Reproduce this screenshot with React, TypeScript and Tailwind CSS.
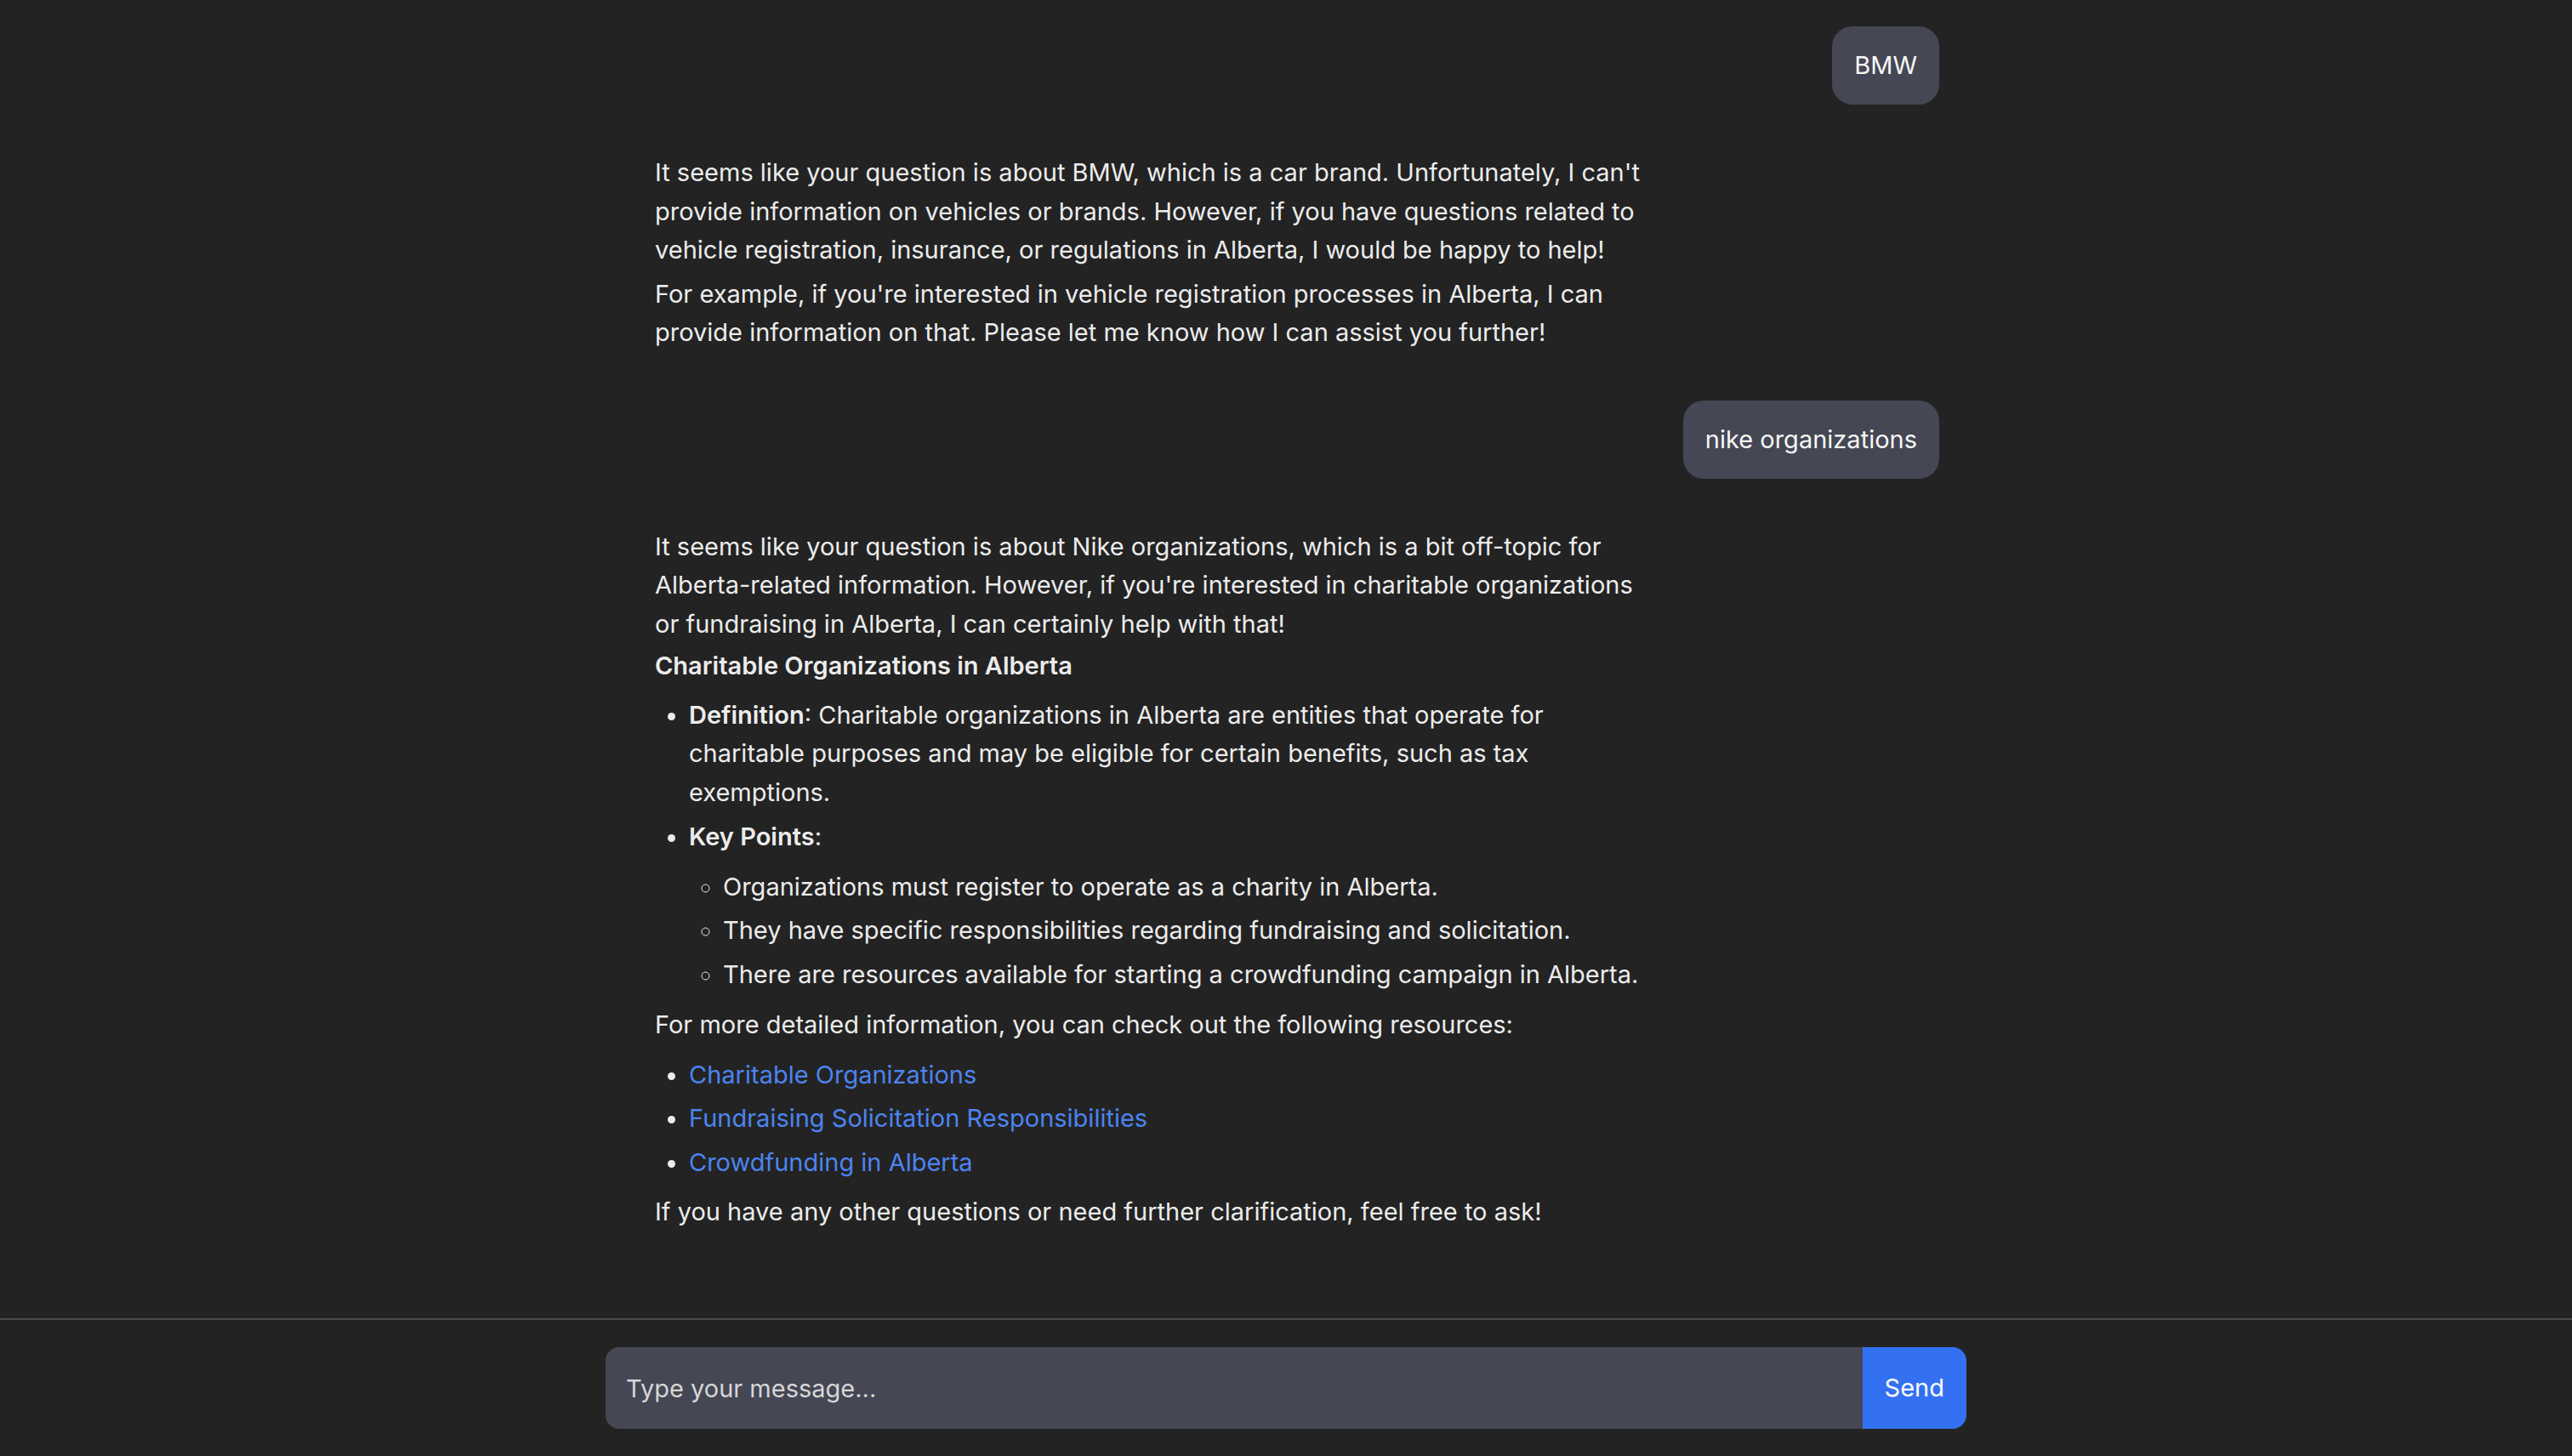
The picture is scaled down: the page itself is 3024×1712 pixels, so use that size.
import { useState } from 'react'

type Msg = { role: 'user' | 'assistant'; text?: string; body?: React.ReactNode }

function UserBubble({ text }: { text: string }) {
  return (
    <div className="flex justify-end">
      <div className="max-w-[80%] rounded-[24px] border-2 border-[#454754] bg-[#454754] px-[24px] py-[24px] leading-[40px] text-[#f7f7f7]">
        {text}
      </div>
    </div>
  )
}

function AssistantBubble({ children }: { children: React.ReactNode }) {
  return <div className="max-w-[80%] p-[26px] leading-[45.5px] text-[#ececec]">{children}</div>
}

function ResourceLink({ label }: { label: string }) {
  return (
    <a href="#" className="text-[#4c84f0]" onClick={(e) => e.preventDefault()}>
      {label}
    </a>
  )
}

const messages: Msg[] = [
  { role: 'user', text: 'BMW' },
  {
    role: 'assistant',
    body: (
      <>
        <p>
          It seems like your question is about BMW, which is a car brand. Unfortunately, I can't provide information on
          vehicles or brands. However, if you have questions related to vehicle registration, insurance, or regulations
          in Alberta, I would be happy to help!
        </p>
        <p className="mt-[6px]">
          For example, if you're interested in vehicle registration processes in Alberta, I can provide information on
          that. Please let me know how I can assist you further!
        </p>
      </>
    ),
  },
  { role: 'user', text: 'nike organizations' },
  {
    role: 'assistant',
    body: (
      <>
        <p>
          It seems like your question is about Nike organizations, which is a bit off-topic for Alberta-related
          information. However, if you're interested in charitable organizations or fundraising in Alberta, I can
          certainly help with that!
        </p>
        <p className="mt-[4px] font-semibold">Charitable Organizations in Alberta</p>
        <ul className="mt-[12px] list-disc pl-[40px]">
          <li>
            <strong className="font-semibold">Definition</strong>: Charitable organizations in Alberta are entities that
            operate for charitable purposes and may be eligible for certain benefits, such as tax exemptions.
          </li>
          <li className="mt-[7px]">
            <strong className="font-semibold">Key Points</strong>:
            <ul className="mt-[13px] list-[circle] pl-[40px]">
              <li>Organizations must register to operate as a charity in Alberta.</li>
              <li className="mt-[6px]">They have specific responsibilities regarding fundraising and solicitation.</li>
              <li className="mt-[6px]">There are resources available for starting a crowdfunding campaign in Alberta.</li>
            </ul>
          </li>
        </ul>
        <p className="mt-[14px]">For more detailed information, you can check out the following resources:</p>
        <ul className="mt-[13px] list-disc pl-[40px]">
          <li>
            <ResourceLink label="Charitable Organizations" />
          </li>
          <li className="mt-[6px]">
            <ResourceLink label="Fundraising Solicitation Responsibilities" />
          </li>
          <li className="mt-[6px]">
            <ResourceLink label="Crowdfunding in Alberta" />
          </li>
        </ul>
        <p className="mt-[13px]">If you have any other questions or need further clarification, feel free to ask!</p>
      </>
    ),
  },
]

export default function App() {
  const [draft, setDraft] = useState('')

  return (
    <div className="flex h-screen flex-col bg-[#232323] font-['Inter','Noto_Sans',sans-serif] text-[29px]">
      <main className="flex-1 overflow-y-auto">
        <div className="mx-auto flex w-[1536px] flex-col gap-[31px] pt-[31px] pb-[32px]">
          {messages.map((m, i) =>
            m.role === 'user' ? (
              <UserBubble key={i} text={m.text || ''} />
            ) : (
              <AssistantBubble key={i}>{m.body}</AssistantBubble>
            )
          )}
        </div>
      </main>

      <footer className="border-t-2 border-[#4b4b4b] p-[32px]">
        <form className="mx-auto flex w-[1600px]" onSubmit={(e) => e.preventDefault()}>
          <input
            value={draft}
            onChange={(e) => setDraft(e.target.value)}
            placeholder="Type your message..."
            className="h-[96px] flex-1 rounded-l-[16px] bg-[#454754] px-[24px] text-[29px] text-white outline-none placeholder:text-[#d6d6d6]"
          />
          <button type="submit" className="rounded-r-[16px] bg-[#3371f2] px-[26px] text-[29px] text-white">
            Send
          </button>
        </form>
      </footer>
    </div>
  )
}
